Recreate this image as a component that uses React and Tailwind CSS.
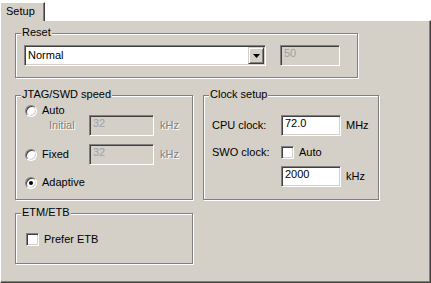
import React from "react";

const sunken =
  "border border-t-[#808080] border-l-[#808080] border-r-white border-b-white shadow-[inset_1px_1px_0_#404040,inset_-1px_-1px_0_#d4d0c8]";
const raised =
  "border border-t-[#d4d0c8] border-l-[#d4d0c8] border-r-[#404040] border-b-[#404040] shadow-[inset_1px_1px_0_#fff,inset_-1px_-1px_0_#808080]";
const etched =
  "relative border border-[#808080] shadow-[inset_1px_1px_0_#fff,1px_1px_0_#fff]";
const dis = "text-[#808080] [text-shadow:1px_1px_0_#fff]";

function Legend({ children }) {
  return (
    <div className="absolute left-[5px] top-[-8px] bg-[#d4d0c8] px-[1px] leading-[13px] text-black">
      {children}
    </div>
  );
}

function Radio({ checked }) {
  return (
    <div className="w-[12px] h-[12px] shrink-0 rounded-full bg-white border border-t-[#808080] border-l-[#808080] border-r-white border-b-white shadow-[inset_1px_1px_0_#404040,inset_-1px_-1px_0_#d4d0c8] flex items-center justify-center">
      {checked && <div className="w-[4px] h-[4px] rounded-full bg-black" />}
    </div>
  );
}

function Check() {
  return <div className={`w-[13px] h-[13px] shrink-0 bg-white ${sunken}`} />;
}

function Field({ value, disabled, w = "w-[60px]" }) {
  return (
    <div
      className={`${w} h-[21px] shrink-0 ${sunken} ${
        disabled ? "bg-[#d4d0c8] text-[#a0a0a4]" : "bg-white text-black"
      } pl-[3px] pt-[1px] leading-[13px]`}
    >
      {value}
    </div>
  );
}

export default function App() {
  return (
    <div
      className="w-[431px] h-[283px] bg-white flex flex-col text-[11px] text-black"
      style={{ fontFamily: '"Liberation Sans", Arial, sans-serif' }}
    >
      <div className="h-[20px] flex items-end">
        <div className="relative z-10 -mb-px w-[45px] h-[19px] bg-[#d4d0c8] border-l border-t border-white border-r border-r-[#404040] shadow-[inset_-1px_0_0_#808080] rounded-tl-[2px] pl-[5px] pt-[2px] leading-[13px]">
          Setup
        </div>
      </div>
      <div className="flex-1 bg-[#d4d0c8] border-t border-l border-white border-r border-b border-r-[#404040] border-b-[#404040] shadow-[inset_-1px_-1px_0_#808080] pl-[14px] pt-[12px]">
        {/* Reset */}
        <div className={`${etched} w-[343px] h-[45px] pl-[8px] pt-[11px]`}>
          <Legend>Reset</Legend>
          <div className="flex items-start gap-[14px]">
            <div className={`w-[242px] h-[21px] bg-white ${sunken} flex items-center pl-[3px] pr-[1px]`}>
              <div className="flex-1 leading-[13px]">Normal</div>
              <div className={`w-[16px] h-[17px] bg-[#d4d0c8] ${raised} flex items-center justify-center`}>
                <svg width="7" height="4" viewBox="0 0 7 4">
                  <path d="M0 0h7L3.5 4z" fill="#000" />
                </svg>
              </div>
            </div>
            <Field value="50" disabled />
          </div>
        </div>

        <div className="flex items-start gap-[10px] mt-[17px]">
          {/* JTAG */}
          <div className={`${etched} w-[178px] h-[105px] pt-[8px]`}>
            <Legend>JTAG/SWD speed</Legend>
            <div className="flex items-center h-[13px] pl-[9px] gap-[5px] leading-[13px]">
              <Radio />
              <span>Auto</span>
            </div>
            <div className="flex items-center h-[21px] mt-[-2px] leading-[13px]">
              <span className={`${dis} w-[73px] pl-[33px]`}>Initial</span>
              <Field value="32" disabled w="w-[65px]" />
              <span className={`${dis} ml-[6px]`}>kHz</span>
            </div>
            <div className="flex items-center h-[21px] mt-[8px] pl-[9px] leading-[13px]">
              <Radio />
              <span className="ml-[5px] w-[47px]">Fixed</span>
              <Field value="32" disabled w="w-[65px]" />
              <span className={`${dis} ml-[6px]`}>kHz</span>
            </div>
            <div className="flex items-center h-[13px] mt-[11px] pl-[9px] gap-[5px] leading-[13px]">
              <Radio checked />
              <span>Adaptive</span>
            </div>
          </div>

          {/* Clock */}
          <div className={`${etched} w-[176px] h-[105px] pt-[19px] pl-[8px]`}>
            <Legend>Clock setup</Legend>
            <div className="flex items-center h-[21px] leading-[13px]">
              <span className="w-[69px]">CPU clock:</span>
              <Field value="72.0" />
              <span className="ml-[5px]">MHz</span>
            </div>
            <div className="flex items-center h-[13px] mt-[10px] leading-[13px]">
              <span className="w-[69px]">SWO clock:</span>
              <Check />
              <span className="ml-[5px]">Auto</span>
            </div>
            <div className="flex items-center h-[21px] mt-[7px] leading-[13px]">
              <span className="w-[69px]" />
              <Field value="2000" />
              <span className="ml-[5px]">kHz</span>
            </div>
          </div>
        </div>

        {/* ETM */}
        <div className={`${etched} w-[178px] h-[51px] mt-[13px] pt-[19px] pl-[10px]`}>
          <Legend>ETM/ETB</Legend>
          <div className="flex items-center h-[13px] gap-[5px] leading-[13px]">
            <Check />
            <span>Prefer ETB</span>
          </div>
        </div>
      </div>
    </div>
  );
}
